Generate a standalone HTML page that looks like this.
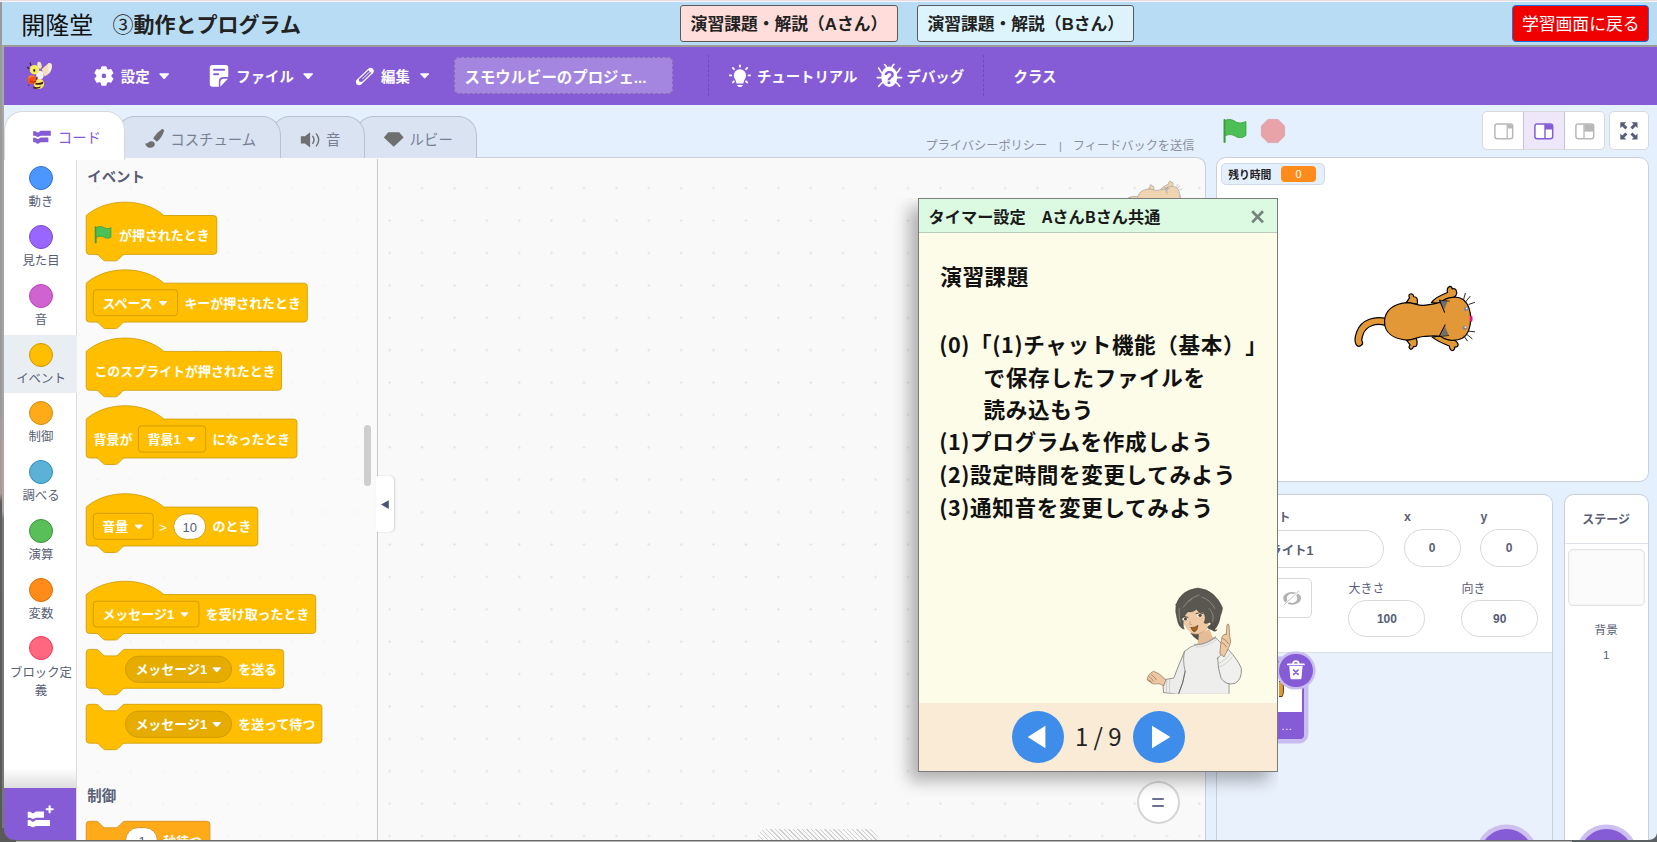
<!DOCTYPE html>
<html lang="ja"><head><meta charset="utf-8"><title>スモウルビー</title><style>
*{box-sizing:border-box;margin:0;padding:0}
html,body{width:1657px;height:842px;overflow:hidden;background:#E5F0FF}
body{position:relative;text-spacing-trim:space-all;font-family:"Liberation Sans","Noto Sans CJK JP",sans-serif;color:#575E75}
.a{position:absolute}
.t{position:absolute;white-space:nowrap}
.b{font-weight:bold}
.w{color:#fff}
svg{position:absolute;overflow:visible}
</style></head><body>
<div class="a" style="left:0.0px;top:0.0px;width:1657.0px;height:2.2px;background:linear-gradient(#E6DCE6 0,#E6DCE6 30%,#FBF3FB 45%,#FBF3FB 100%)"></div>
<div class="a" style="left:0.0px;top:2.0px;width:1657.0px;height:43.2px;background:#B9DCF5"></div>
<div class="a" style="left:0.0px;top:45.0px;width:1657.0px;height:2.0px;background:#9A9A9A"></div>
<div class="t " style="left:21.3px;top:7.9px;line-height:36.0px;font-size:24px;color:#111">開隆堂</div>
<div class="t b" style="left:112.6px;top:8.9px;line-height:31.5px;font-size:21px;color:#222"><span style="font-weight:400">③</span>動作とプログラム</div>
<div class="a" style="left:680.2px;top:5.1px;width:217.6px;height:36.5px;background:#FFDDDB;border:1px solid #5a5a5a;border-radius:3px"></div>
<div class="t b" style="left:690.6px;top:11.8px;line-height:25.2px;font-size:16.8px;color:#222">演習課題・解説（Aさん）</div>
<div class="a" style="left:917.0px;top:5.1px;width:216.7px;height:36.5px;background:#DDF4FC;border:1px solid #5a5a5a;border-radius:3px"></div>
<div class="t b" style="left:927.4px;top:11.8px;line-height:25.2px;font-size:16.8px;color:#222">演習課題・解説（Bさん）</div>
<div class="a" style="left:1512.3px;top:5.1px;width:137.2px;height:36.5px;background:#F00000;border:1px solid #1f6fd6;border-radius:4px"></div>
<div class="t w" style="left:1522.0px;top:12.2px;line-height:25.2px;font-size:16.8px;">学習画面に戻る</div>
<div class="a" style="left:4.0px;top:47.0px;width:1653.0px;height:57.6px;background:#855CD6"></div>
<svg style="left:20.00px;top:55.00px" width="40.00" height="40.00" viewBox="0 0 842 842" >
<ellipse cx="410" cy="215" rx="45" ry="75" fill="#F6E3C6" transform="rotate(-12 410 215)"/>
<path d="M455,300 L600,175 Q665,150 672,225 Q670,330 600,400 L520,455 Z" fill="#F5DDBE"/>
<path d="M590,180 Q665,150 672,225 Q670,330 610,395 Q590,300 590,180Z" fill="#F7EED8"/>
<ellipse cx="420" cy="420" rx="80" ry="90" fill="#F3F0F2"/>
<ellipse cx="400" cy="610" rx="110" ry="105" fill="#F5E868" transform="rotate(-30 400 610)"/>
<path d="M330,585 Q420,600 495,560 L480,610 Q400,640 320,620Z" fill="#4A1F1A"/>
<path d="M285,665 Q360,700 440,660 L420,695 Q350,725 280,700Z" fill="#4A1F1A"/>
<ellipse cx="305" cy="310" rx="100" ry="100" fill="#F7EE5E"/>
<ellipse cx="300" cy="325" rx="22" ry="30" fill="#3A2030"/>
<circle cx="250" cy="520" r="98" fill="#F0531C"/>
<path d="M190,470 Q230,430 290,450" stroke="#F79A5A" stroke-width="22" fill="none" stroke-linecap="round"/>
<path d="M215,550 Q260,590 330,560" stroke="#8A2410" stroke-width="16" fill="none" stroke-linecap="round"/>
<path d="M225,215 L215,165" stroke="#3A1830" stroke-width="24" stroke-linecap="round"/>
<path d="M185,285 L155,258" stroke="#3A1830" stroke-width="24" stroke-linecap="round"/>
<path d="M360,470 L350,510" stroke="#4A1F1A" stroke-width="22" stroke-linecap="round"/>
<path d="M190,630 L175,640" stroke="#4A1F1A" stroke-width="18" stroke-linecap="round"/>
</svg>
<svg style="left:0;top:0" width="200" height="110" viewBox="0 0 200 110"><g transform="translate(103.9,75.9)"><polygon points="2.51,-6.54 1.91,-9.00 -1.91,-9.00 -2.51,-6.54 -4.41,-5.44 -6.84,-6.16 -8.75,-2.84 -6.91,-1.10 -6.91,1.10 -8.75,2.84 -6.84,6.16 -4.41,5.44 -2.51,6.54 -1.91,9.00 1.91,9.00 2.51,6.54 4.41,5.44 6.84,6.16 8.75,2.84 6.91,1.10 6.91,-1.10 8.75,-2.84 6.84,-6.16 4.41,-5.44" fill="#fff" stroke="#fff" stroke-width="1.5" stroke-linejoin="round"/><circle r="2.3" fill="#855CD6"/></g></svg>
<div class="t b w" style="left:120.8px;top:66.7px;line-height:21.6px;font-size:14.4px;">設定</div>
<svg style="left:158.9px;top:73.1px" width="10.3" height="6.2" viewBox="0 0 10 6"><path d="M0.9,0.2 H9.1 Q10.2,0.4 9.5,1.3 L5.7,5.5 Q5,6.2 4.3,5.5 L0.5,1.3 Q-0.2,0.4 0.9,0.2Z" fill="#fff"/></svg>
<svg style="left:200.00px;top:58.00px" width="90.00" height="36.00" viewBox="0 0 1657 663" ><path d="M230,128 H470 Q520,128 520,178 V352 H432 Q347,352 347,437 V530 H230 Q180,530 180,480 V178 Q180,128 230,128Z" fill="#fff"/>
<path d="M374,528 V447 Q374,382 439,382 H514 Z" fill="#fff"/>
<path d="M258,215 H445" stroke="#855CD6" stroke-width="36" stroke-linecap="round"/>
<path d="M258,300 H335" stroke="#855CD6" stroke-width="36" stroke-linecap="round"/></svg>
<div class="t b w" style="left:236.3px;top:66.7px;line-height:21.6px;font-size:14.4px;">ファイル</div>
<svg style="left:303.0px;top:73.1px" width="10.3" height="6.2" viewBox="0 0 10 6"><path d="M0.9,0.2 H9.1 Q10.2,0.4 9.5,1.3 L5.7,5.5 Q5,6.2 4.3,5.5 L0.5,1.3 Q-0.2,0.4 0.9,0.2Z" fill="#fff"/></svg>
<svg style="left:345.00px;top:58.00px" width="90.00" height="36.00" viewBox="0 0 1657 663" ><path d="M262,440 L470,240" stroke="#fff" stroke-width="118" stroke-linecap="round"/>
<path d="M210,488 L226,400 L300,476 Z" fill="#fff"/>
<path d="M298,405 L462,247" stroke="#855CD6" stroke-width="72" stroke-linecap="butt"/>
<path d="M300,403 L480,230" stroke="#fff" stroke-width="17"/>
<path d="M425,205 L505,288" stroke="#fff" stroke-width="16"/>
<circle cx="291" cy="407" r="37" fill="#855CD6"/></svg>
<div class="t b w" style="left:381.0px;top:66.7px;line-height:21.6px;font-size:14.4px;">編集</div>
<svg style="left:420.0px;top:73.4px" width="9.3" height="5.6" viewBox="0 0 10 6"><path d="M0.9,0.2 H9.1 Q10.2,0.4 9.5,1.3 L5.7,5.5 Q5,6.2 4.3,5.5 L0.5,1.3 Q-0.2,0.4 0.9,0.2Z" fill="#fff"/></svg>
<div class="a" style="left:454.0px;top:57.0px;width:219.3px;height:37.0px;background:#A485E0;border:1px dashed rgba(0,0,0,.2);border-radius:5px"></div>
<div class="t b w" style="left:464.5px;top:65.7px;line-height:23.1px;font-size:15.4px;">スモウルビーのプロジェ...</div>
<div class="a" style="left:708.0px;top:55.0px;width:1.0px;height:41.0px;border-left:1px dashed #6E48BE"></div>
<div class="a" style="left:983.0px;top:55.0px;width:1.0px;height:41.0px;border-left:1px dashed #6E48BE"></div>
<svg style="left:722.00px;top:58.00px" width="90.00" height="36.00" viewBox="0 0 1657 663" ><circle cx="330" cy="320" r="112" fill="#fff"/>
<path d="M245,385 H415 L392,470 H268 Z" fill="#fff"/>
<path d="M272,495 Q330,575 388,495 Z" fill="#fff"/>
<g stroke="#fff" stroke-width="34" stroke-linecap="round">
<path d="M330,135 V160"/><path d="M200,183 L220,208"/><path d="M462,183 L442,208"/>
<path d="M145,320 H170"/><path d="M490,320 H515"/><path d="M200,450 L220,430"/><path d="M462,450 L442,430"/></g></svg>
<div class="t b w" style="left:756.9px;top:66.7px;line-height:21.6px;font-size:14.4px;">チュートリアル</div>
<svg style="left:870.00px;top:58.00px" width="90.00" height="36.00" viewBox="0 0 1657 663" ><ellipse cx="355" cy="345" rx="148" ry="188" fill="#fff"/>
<g stroke="#fff" stroke-width="30" stroke-linecap="round" fill="none">
<path d="M305,170 Q295,135 268,122"/><path d="M405,170 Q415,135 440,118"/>
<path d="M235,285 Q185,250 160,185"/><path d="M475,285 Q525,250 553,190"/>
<path d="M215,362 H135"/><path d="M495,362 H583"/>
<path d="M245,440 Q200,470 162,522"/><path d="M468,440 Q510,470 545,520"/></g>
<text x="355" y="485" font-size="330" font-weight="bold" fill="#855CD6" text-anchor="middle" font-family="Liberation Sans,sans-serif">?</text></svg>
<div class="t b w" style="left:906.5px;top:66.7px;line-height:21.6px;font-size:14.4px;">デバッグ</div>
<div class="t b w" style="left:1013.5px;top:66.7px;line-height:21.6px;font-size:14.4px;">クラス</div>
<div class="t " style="left:925.5px;top:136.6px;line-height:18.3px;font-size:12.2px;color:#8A8F9C">プライバシーポリシー</div>
<div class="t " style="left:1059.0px;top:138.1px;line-height:16.5px;font-size:11px;color:#8A8F9C">|</div>
<div class="t " style="left:1072.8px;top:136.6px;line-height:18.3px;font-size:12.2px;color:#8A8F9C">フィードバックを送信</div>
<div class="a" style="left:4.0px;top:156.6px;width:1202.0px;height:683.4px;border:1px solid #C9CFD9;border-bottom:0;border-radius:0 9.6px 0 0;background-color:#F9F9F9;background-image:radial-gradient(circle,#E2E2E2 0.85px,rgba(226,226,226,0) 1.45px);background-size:32.4px 32.4px;background-position:12.2px 14.0px;"></div>
<div class="a" style="left:77.0px;top:158.5px;width:300.5px;height:681.5px;background:rgba(249,249,249,.72);border-right:1px solid #C8C8C8"></div>
<div class="a" style="left:4.0px;top:158.5px;width:73.0px;height:681.5px;background:#fff;border-right:1px solid #DCDCDC"></div>
<div class="a" style="left:354.7px;top:115.6px;width:122.1px;height:42.4px;background:#D9E3F2;border:1px solid rgba(0,0,0,.15);border-bottom:0;border-radius:19px 19px 0 0"></div>
<div class="a" style="left:271.0px;top:115.6px;width:93.5px;height:42.4px;background:#D9E3F2;border:1px solid rgba(0,0,0,.15);border-bottom:0;border-radius:19px 19px 0 0"></div>
<div class="a" style="left:115.7px;top:115.6px;width:165.1px;height:42.4px;background:#D9E3F2;border:1px solid rgba(0,0,0,.15);border-bottom:0;border-radius:19px 19px 0 0"></div>
<div class="a" style="left:4.0px;top:111.2px;width:121.3px;height:48.8px;background:#fff;border:1px solid rgba(0,0,0,.15);border-bottom:0;border-radius:19px 19px 0 0"></div>
<svg style="left:25.00px;top:120.00px" width="90.00" height="36.00" viewBox="0 0 1657 663" ><path d="M150,205 H190 Q200,205 208,215 Q220,228 235,228 Q255,228 270,212 Q278,200 295,200 H475 V290 H290 Q278,290 268,300 Q255,312 235,312 Q215,312 203,300 Q195,290 185,290 H150 Z" fill="#855CD6"/>
<path d="M150,325 H190 Q200,325 208,335 Q220,348 235,348 Q255,348 270,332 Q278,320 295,320 H430 V410 H290 Q278,410 268,420 Q255,436 235,436 Q215,436 203,420 Q195,410 185,410 H150 Z" fill="#855CD6"/></svg>
<div class="t " style="left:57.8px;top:128.4px;line-height:21.6px;font-size:14.4px;color:#855CD6">コード</div>
<svg style="left:135.00px;top:120.00px" width="90.00" height="36.00" viewBox="0 0 1657 663" ><path d="M335,335 Q400,230 500,168 Q535,160 532,205 Q500,320 400,402 Z" fill="#6F6F6F"/>
<path d="M185,432 Q225,440 255,405 Q300,375 345,405 Q385,445 345,490 Q300,525 245,505 Q195,480 185,432Z" fill="#6F6F6F"/></svg>
<div class="t " style="left:170.3px;top:130.2px;line-height:21.6px;font-size:14.4px;color:#787F94">コスチューム</div>
<svg style="left:290.00px;top:120.00px" width="180.00" height="36.00" viewBox="0 0 1657 331" ><path d="M100,150 H138 L185,113 V252 L138,215 H100 Z" fill="#6F6F6F"/>
<path d="M210,150 Q232,182 210,215" stroke="#6F6F6F" stroke-width="13" fill="none" stroke-linecap="round"/>
<path d="M243,128 Q285,182 243,238" stroke="#6F6F6F" stroke-width="13" fill="none" stroke-linecap="round"/>
<path d="M905,113 H1005 L1046,160 L955,247 L864,160 Z" fill="#6F6F6F"/></svg>
<div class="t " style="left:326.0px;top:130.2px;line-height:21.6px;font-size:14.4px;color:#787F94">音</div>
<div class="t " style="left:409.6px;top:130.2px;line-height:21.6px;font-size:14.4px;color:#787F94">ルビー</div>
<div class="a" style="left:4.0px;top:334.9px;width:72.5px;height:58.1px;background:#E9EEF2"></div>
<div class="a" style="left:29.0px;top:166.2px;width:24.0px;height:24.0px;background:#4C97FF;border:1px solid #3373CC;border-radius:50%"></div>
<div class="t " style="left:41.0px;transform:translateX(-50%);top:193.3px;line-height:18.6px;font-size:12.4px;color:#575E75">動き</div>
<div class="a" style="left:29.0px;top:225.0px;width:24.0px;height:24.0px;background:#9966FF;border:1px solid #774DCB;border-radius:50%"></div>
<div class="t " style="left:41.0px;transform:translateX(-50%);top:252.1px;line-height:18.6px;font-size:12.4px;color:#575E75">見た目</div>
<div class="a" style="left:29.0px;top:283.8px;width:24.0px;height:24.0px;background:#CF63CF;border:1px solid #BD42BD;border-radius:50%"></div>
<div class="t " style="left:41.0px;transform:translateX(-50%);top:310.9px;line-height:18.6px;font-size:12.4px;color:#575E75">音</div>
<div class="a" style="left:29.0px;top:342.5px;width:24.0px;height:24.0px;background:#FFBF00;border:1px solid #CC9900;border-radius:50%"></div>
<div class="t " style="left:41.0px;transform:translateX(-50%);top:369.6px;line-height:18.6px;font-size:12.4px;color:#575E75">イベント</div>
<div class="a" style="left:29.0px;top:401.3px;width:24.0px;height:24.0px;background:#FFAB19;border:1px solid #CF8B17;border-radius:50%"></div>
<div class="t " style="left:41.0px;transform:translateX(-50%);top:428.4px;line-height:18.6px;font-size:12.4px;color:#575E75">制御</div>
<div class="a" style="left:29.0px;top:460.1px;width:24.0px;height:24.0px;background:#5CB1D6;border:1px solid #2E8EB8;border-radius:50%"></div>
<div class="t " style="left:41.0px;transform:translateX(-50%);top:487.2px;line-height:18.6px;font-size:12.4px;color:#575E75">調べる</div>
<div class="a" style="left:29.0px;top:518.9px;width:24.0px;height:24.0px;background:#59C059;border:1px solid #389438;border-radius:50%"></div>
<div class="t " style="left:41.0px;transform:translateX(-50%);top:546.0px;line-height:18.6px;font-size:12.4px;color:#575E75">演算</div>
<div class="a" style="left:29.0px;top:577.7px;width:24.0px;height:24.0px;background:#FF8C1A;border:1px solid #DB6E00;border-radius:50%"></div>
<div class="t " style="left:41.0px;transform:translateX(-50%);top:604.8px;line-height:18.6px;font-size:12.4px;color:#575E75">変数</div>
<div class="a" style="left:29.0px;top:636.4px;width:24.0px;height:24.0px;background:#FF6680;border:1px solid #FF3355;border-radius:50%"></div>
<div class="t " style="left:41.0px;transform:translateX(-50%);top:663.5px;line-height:18.6px;font-size:12.4px;color:#575E75">ブロック定</div>
<div class="t " style="left:41.0px;transform:translateX(-50%);top:682.3px;line-height:18.6px;font-size:12.4px;color:#575E75">義</div>
<div class="a" style="left:4.0px;top:768.0px;width:72.0px;height:19.6px;background:linear-gradient(rgba(255,255,255,0),rgba(222,222,222,1))"></div>
<div class="a" style="left:4.0px;top:787.6px;width:72.2px;height:52.4px;background:#855CD6;border-radius:0 0 0 8px"></div>
<svg style="left:14.00px;top:790.00px" width="60.00" height="48.00" viewBox="0 0 1052 842" ><g fill="#fff">
<path d="M240,380 H280 Q292,380 300,392 Q312,410 332,410 Q352,410 364,392 Q372,378 388,378 H525 V485 H388 Q374,485 364,495 Q352,508 332,508 Q312,508 300,495 Q292,485 280,485 H240Z"/>
<path d="M240,527 H280 Q292,527 300,539 Q312,557 332,557 Q352,557 364,539 Q372,525 388,525 H630 V630 H388 Q374,630 364,640 Q352,653 332,653 Q312,653 300,640 Q292,630 280,630 H240Z"/>
</g><path d="M625,285 V392 M572,338 H678" stroke="#fff" stroke-width="38" stroke-linecap="round"/></svg>
<div class="t b" style="left:87.3px;top:166.6px;line-height:21.6px;font-size:14.4px;color:#575E75">イベント</div>
<div class="t b" style="left:87.3px;top:785.6px;line-height:21.6px;font-size:14.4px;color:#575E75">制御</div>
<div class="a" style="left:77px;top:158px;width:300px;height:682px;overflow:hidden"><svg style="left:-77px;top:-158px;overflow:visible" width="380" height="880" viewBox="0 0 380 880"><path transform="translate(86.20,215.50) scale(0.810)" d="m 0,0 c 25,-22 71,-22 96,0 H 157.2 a 4,4 0 0,1 4,4 v 40 a 4,4 0 0,1 -4,4 H 48 c -2,0 -3,1 -4,2 l -4,4 c -1,1 -2,2 -4,2 h -12 c -2,0 -3,-1 -4,-2 l -4,-4 c -1,-1 -2,-2 -4,-2 H 4 a 4,4 0 0,1 -4,-4 z" fill="#FFBF00" stroke="#CC9900" stroke-width="1"/><path transform="translate(86.20,283.20) scale(0.810)" d="m 0,0 c 25,-22 71,-22 96,0 H 269.0 a 4,4 0 0,1 4,4 v 40 a 4,4 0 0,1 -4,4 H 48 c -2,0 -3,1 -4,2 l -4,4 c -1,1 -2,2 -4,2 h -12 c -2,0 -3,-1 -4,-2 l -4,-4 c -1,-1 -2,-2 -4,-2 H 4 a 4,4 0 0,1 -4,-4 z" fill="#FFBF00" stroke="#CC9900" stroke-width="1"/><rect x="93.3" y="289.8" width="84.3" height="25.8" rx="3.2" fill="#FFBF00" stroke="#CC9900" stroke-width="0.9"/><path transform="translate(158.5,300.7) scale(0.890)" d="M0.9,0.2 H9.1 Q10.2,0.4 9.5,1.3 L5.7,5.5 Q5,6.2 4.3,5.5 L0.5,1.3 Q-0.2,0.4 0.9,0.2Z" fill="#fff" stroke="rgba(0,0,0,.12)" stroke-width=".4"/><path transform="translate(86.20,351.40) scale(0.810)" d="m 0,0 c 25,-22 71,-22 96,0 H 237.1 a 4,4 0 0,1 4,4 v 40 a 4,4 0 0,1 -4,4 H 48 c -2,0 -3,1 -4,2 l -4,4 c -1,1 -2,2 -4,2 h -12 c -2,0 -3,-1 -4,-2 l -4,-4 c -1,-1 -2,-2 -4,-2 H 4 a 4,4 0 0,1 -4,-4 z" fill="#FFBF00" stroke="#CC9900" stroke-width="1"/><path transform="translate(86.20,419.10) scale(0.810)" d="m 0,0 c 25,-22 71,-22 96,0 H 256.2 a 4,4 0 0,1 4,4 v 40 a 4,4 0 0,1 -4,4 H 48 c -2,0 -3,1 -4,2 l -4,4 c -1,1 -2,2 -4,2 h -12 c -2,0 -3,-1 -4,-2 l -4,-4 c -1,-1 -2,-2 -4,-2 H 4 a 4,4 0 0,1 -4,-4 z" fill="#FFBF00" stroke="#CC9900" stroke-width="1"/><rect x="138.4" y="425.9" width="67.3" height="26.2" rx="3.2" fill="#FFBF00" stroke="#CC9900" stroke-width="0.9"/><path transform="translate(186.8,436.8) scale(0.860)" d="M0.9,0.2 H9.1 Q10.2,0.4 9.5,1.3 L5.7,5.5 Q5,6.2 4.3,5.5 L0.5,1.3 Q-0.2,0.4 0.9,0.2Z" fill="#fff" stroke="rgba(0,0,0,.12)" stroke-width=".4"/><path transform="translate(86.20,507.10) scale(0.810)" d="m 0,0 c 25,-22 71,-22 96,0 H 207.9 a 4,4 0 0,1 4,4 v 40 a 4,4 0 0,1 -4,4 H 48 c -2,0 -3,1 -4,2 l -4,4 c -1,1 -2,2 -4,2 h -12 c -2,0 -3,-1 -4,-2 l -4,-4 c -1,-1 -2,-2 -4,-2 H 4 a 4,4 0 0,1 -4,-4 z" fill="#FFBF00" stroke="#CC9900" stroke-width="1"/><rect x="93.3" y="513.3" width="59.9" height="26.0" rx="3.2" fill="#FFBF00" stroke="#CC9900" stroke-width="0.9"/><path transform="translate(134.5,524.4) scale(0.850)" d="M0.9,0.2 H9.1 Q10.2,0.4 9.5,1.3 L5.7,5.5 Q5,6.2 4.3,5.5 L0.5,1.3 Q-0.2,0.4 0.9,0.2Z" fill="#fff" stroke="rgba(0,0,0,.12)" stroke-width=".4"/><rect x="173.7" y="513.9" width="32.0" height="25.4" rx="12.7" fill="#fff" stroke="#CC9900" stroke-width="0.9"/><path transform="translate(86.20,594.60) scale(0.810)" d="m 0,0 c 25,-22 71,-22 96,0 H 279.3 a 4,4 0 0,1 4,4 v 40 a 4,4 0 0,1 -4,4 H 48 c -2,0 -3,1 -4,2 l -4,4 c -1,1 -2,2 -4,2 h -12 c -2,0 -3,-1 -4,-2 l -4,-4 c -1,-1 -2,-2 -4,-2 H 4 a 4,4 0 0,1 -4,-4 z" fill="#FFBF00" stroke="#CC9900" stroke-width="1"/><rect x="93.3" y="601.2" width="105.7" height="25.8" rx="3.2" fill="#FFBF00" stroke="#CC9900" stroke-width="0.9"/><path transform="translate(180.3,612.0) scale(0.850)" d="M0.9,0.2 H9.1 Q10.2,0.4 9.5,1.3 L5.7,5.5 Q5,6.2 4.3,5.5 L0.5,1.3 Q-0.2,0.4 0.9,0.2Z" fill="#fff" stroke="rgba(0,0,0,.12)" stroke-width=".4"/><path transform="translate(86.20,649.40) scale(0.810)" d="m 0,4 A 4,4 0 0,1 4,0 H 12 c 2,0 3,1 4,2 l 4,4 c 1,1 2,2 4,2 h 12 c 2,0 3,-1 4,-2 l 4,-4 c 1,-1 2,-2 4,-2 H 239.7 a 4,4 0 0,1 4,4 v 40 a 4,4 0 0,1 -4,4 H 48 c -2,0 -3,1 -4,2 l -4,4 c -1,1 -2,2 -4,2 h -12 c -2,0 -3,-1 -4,-2 l -4,-4 c -1,-1 -2,-2 -4,-2 H 4 a 4,4 0 0,1 -4,-4 z" fill="#FFBF00" stroke="#CC9900" stroke-width="1"/><rect x="125.4" y="656.2" width="106.2" height="26.2" rx="13.1" fill="#E6AC00" stroke="#CC9900" stroke-width="0.9"/><path transform="translate(212.3,667.0) scale(0.890)" d="M0.9,0.2 H9.1 Q10.2,0.4 9.5,1.3 L5.7,5.5 Q5,6.2 4.3,5.5 L0.5,1.3 Q-0.2,0.4 0.9,0.2Z" fill="#fff" stroke="rgba(0,0,0,.12)" stroke-width=".4"/><path transform="translate(86.20,704.30) scale(0.810)" d="m 0,4 A 4,4 0 0,1 4,0 H 12 c 2,0 3,1 4,2 l 4,4 c 1,1 2,2 4,2 h 12 c 2,0 3,-1 4,-2 l 4,-4 c 1,-1 2,-2 4,-2 H 287.0 a 4,4 0 0,1 4,4 v 40 a 4,4 0 0,1 -4,4 H 48 c -2,0 -3,1 -4,2 l -4,4 c -1,1 -2,2 -4,2 h -12 c -2,0 -3,-1 -4,-2 l -4,-4 c -1,-1 -2,-2 -4,-2 H 4 a 4,4 0 0,1 -4,-4 z" fill="#FFBF00" stroke="#CC9900" stroke-width="1"/><rect x="125.4" y="711.1" width="106.2" height="26.2" rx="13.1" fill="#E6AC00" stroke="#CC9900" stroke-width="0.9"/><path transform="translate(212.3,721.9) scale(0.890)" d="M0.9,0.2 H9.1 Q10.2,0.4 9.5,1.3 L5.7,5.5 Q5,6.2 4.3,5.5 L0.5,1.3 Q-0.2,0.4 0.9,0.2Z" fill="#fff" stroke="rgba(0,0,0,.12)" stroke-width=".4"/><path transform="translate(86.20,821.30) scale(0.810)" d="m 0,4 A 4,4 0 0,1 4,0 H 12 c 2,0 3,1 4,2 l 4,4 c 1,1 2,2 4,2 h 12 c 2,0 3,-1 4,-2 l 4,-4 c 1,-1 2,-2 4,-2 H 148.7 a 4,4 0 0,1 4,4 v 40 a 4,4 0 0,1 -4,4 H 48 c -2,0 -3,1 -4,2 l -4,4 c -1,1 -2,2 -4,2 h -12 c -2,0 -3,-1 -4,-2 l -4,-4 c -1,-1 -2,-2 -4,-2 H 4 a 4,4 0 0,1 -4,-4 z" fill="#FFAB19" stroke="#CF8B17" stroke-width="1"/><rect x="125.6" y="827.6" width="31.8" height="25.4" rx="12.7" fill="#fff" stroke="#CF8B17" stroke-width="0.9"/><g transform="translate(94.7,226.3) scale(0.81)"><path d="M1.2,1 V20" stroke="#45993D" stroke-width="2.4" stroke-linecap="round"/><path d="M1.5,2.2 C5,-0.5 9,0 12,1.8 C15,3.5 17.5,3 20,1.6 V13.5 C17.5,15 15,15.3 12,13.6 C9,12 5,11.6 1.5,14 Z" fill="#4CBF56" stroke="#45993D" stroke-width="1"/></g></svg></div>
<div class="t " style="left:119.0px;top:225.9px;line-height:19.4px;font-size:12.96px;font-weight:bold;color:#fff;">が押されたとき</div>
<div class="t " style="left:102.4px;top:293.8px;line-height:19.4px;font-size:12.96px;font-weight:bold;color:#fff;">スペース</div>
<div class="t " style="left:184.4px;top:293.8px;line-height:19.4px;font-size:12.96px;font-weight:bold;color:#fff;">キーが押されたとき</div>
<div class="t " style="left:94.4px;top:361.8px;line-height:19.4px;font-size:12.96px;font-weight:bold;color:#fff;">このスプライトが押されたとき</div>
<div class="t " style="left:93.5px;top:429.6px;line-height:19.4px;font-size:12.96px;font-weight:bold;color:#fff;">背景が</div>
<div class="t " style="left:147.5px;top:429.6px;line-height:19.4px;font-size:12.96px;font-weight:bold;color:#fff;">背景1</div>
<div class="t " style="left:212.6px;top:429.6px;line-height:19.4px;font-size:12.96px;font-weight:bold;color:#fff;">になったとき</div>
<div class="t " style="left:102.2px;top:517.4px;line-height:19.4px;font-size:12.96px;font-weight:bold;color:#fff;">音量</div>
<div class="t " style="left:159.0px;top:518.1px;line-height:19.4px;font-size:12.96px;color:#fff">&gt;</div>
<div class="t " style="left:189.7px;transform:translateX(-50%);top:518.1px;line-height:19.4px;font-size:12.96px;color:#575E75">10</div>
<div class="t " style="left:212.6px;top:517.4px;line-height:19.4px;font-size:12.96px;font-weight:bold;color:#fff;">のとき</div>
<div class="t " style="left:102.4px;top:605.1px;line-height:19.4px;font-size:12.96px;font-weight:bold;color:#fff;">メッセージ1</div>
<div class="t " style="left:205.8px;top:605.1px;line-height:19.4px;font-size:12.96px;font-weight:bold;color:#fff;">を受け取ったとき</div>
<div class="t " style="left:135.4px;top:660.0px;line-height:19.4px;font-size:12.96px;font-weight:bold;color:#fff;">メッセージ1</div>
<div class="t " style="left:238.2px;top:660.0px;line-height:19.4px;font-size:12.96px;font-weight:bold;color:#fff;">を送る</div>
<div class="t " style="left:135.4px;top:714.8px;line-height:19.4px;font-size:12.96px;font-weight:bold;color:#fff;">メッセージ1</div>
<div class="t " style="left:238.2px;top:714.8px;line-height:19.4px;font-size:12.96px;font-weight:bold;color:#fff;">を送って待つ</div>
<div class="a" style="left:77px;top:820px;width:300px;height:20px;overflow:hidden"><div class="t" style="left:61.5px;top:12.3px;font-size:12.96px;line-height:20px;color:#575E75">1</div><div class="t" style="left:86.3px;top:12.3px;font-size:12.96px;line-height:20px;font-weight:bold;color:#fff">秒待つ</div></div>
<div class="a" style="left:364.1px;top:424.7px;width:6.7px;height:61.4px;background:#CECECE;border-radius:4px"></div>
<div class="a" style="left:376.4px;top:475.7px;width:17.8px;height:56.4px;background:#fff;border-radius:0 5px 5px 0;box-shadow:1px 0 2px rgba(0,0,0,.15)"></div>
<svg style="left:381.3px;top:499.8px" width="7.8" height="9.2" viewBox="0 0 8 9"><path d="M8,0 V9 L0,4.5Z" fill="#4C5674"/></svg>
<div class="a" style="left:758.0px;top:828.6px;width:119.6px;height:11.4px;border-radius:8px 8px 0 0;background-color:#F9F9F9;background-image:repeating-linear-gradient(45deg,#D0D0D0 0,#D0D0D0 1px,rgba(0,0,0,0) 1px,rgba(0,0,0,0) 3.2px)"></div>
<div class="a" style="left:1137.0px;top:780.9px;width:42.8px;height:42.9px;background:#fff;border:2px solid #D5D5D5;border-radius:50%"></div>
<div class="a" style="left:1152.1px;top:797.7px;width:12.3px;height:2.3px;background:#6B7190;border-radius:1.2px"></div>
<div class="a" style="left:1152.1px;top:804.7px;width:12.3px;height:2.3px;background:#6B7190;border-radius:1.2px"></div>
<svg style="left:1115.8px;top:173.0px;opacity:0.38" width="78.4" height="49.0" viewBox="0 0 1347 842"><g stroke-linejoin="round" stroke-linecap="round">
<path d="M388,438 C300,415 200,440 168,530 C152,575 152,600 160,612" stroke="#000" stroke-width="68" fill="none"/>
<path d="M388,438 C300,415 200,440 168,530 C152,575 152,600 160,612" stroke="#E39838" stroke-width="48" fill="none"/>
<g fill="#E39838" stroke="#000" stroke-width="10">
<path d="M560,270 L585,235 Q570,205 600,200 Q620,205 620,225 Q650,225 650,250 Q655,270 650,290 Z"/>
<path d="M560,590 L590,630 Q570,655 595,668 Q615,665 618,645 Q645,648 648,625 Q655,600 640,575 Z"/>
<path d="M770,275 Q800,230 905,190 Q895,150 925,138 Q945,140 945,160 Q975,150 980,178 Q990,195 975,215 L900,290 Z"/>
<path d="M775,565 Q820,600 920,640 Q925,680 950,678 Q968,672 965,650 Q995,650 995,625 Q985,600 960,590 L900,545 Z"/>
<path d="M375,435 C375,340 450,285 560,275 C620,275 650,300 700,298 C760,290 800,285 850,270 C900,225 990,215 1040,250 C1085,290 1100,350 1100,410 C1100,470 1085,540 1030,575 C980,600 900,600 850,560 C800,550 760,555 700,560 C650,565 620,590 560,590 C450,580 375,530 375,435 Z"/>
</g>
<path d="M838,255 L905,262 L880,330 Z" fill="#6E6E6E" stroke="none"/>
<path d="M838,255 L880,355" stroke="#000" stroke-width="9" fill="none"/>
<path d="M838,255 L920,262" stroke="#000" stroke-width="6" fill="none"/>
<path d="M845,555 L915,548 L885,478 Z" fill="#6E6E6E" stroke="none"/>
<path d="M835,560 L885,462" stroke="#000" stroke-width="9" fill="none"/>
<path d="M835,560 L915,552" stroke="#000" stroke-width="6" fill="none"/>
<circle cx="1060" cy="328" r="19" fill="#8A8A8A"/><circle cx="1066" cy="322" r="7" fill="#fff"/>
<circle cx="1050" cy="487" r="19" fill="#8A8A8A"/><circle cx="1056" cy="481" r="7" fill="#fff"/>
<ellipse cx="1104" cy="410" rx="12" ry="27" fill="#E0109A"/>
<g stroke="#222" stroke-width="8" fill="none">
<path d="M1040,250 L1055,197"/><path d="M1058,268 L1095,222"/><path d="M1085,290 L1133,273"/>
<path d="M1080,515 L1133,520"/><path d="M1065,540 L1112,578"/><path d="M1045,557 L1072,597"/>
</g></g></svg>
<svg style="left:1215.00px;top:108.00px" width="80.00" height="44.00" viewBox="0 0 1531 842" ><path d="M183,232 V650" stroke="#3F9A3A" stroke-width="40" stroke-linecap="round"/>
<path d="M190,245 C240,205 330,215 390,260 C450,300 530,290 592,258 V525 C530,575 450,580 390,540 C330,500 250,500 190,535 Z" fill="#4CBF56" stroke="#3F9A3A" stroke-width="16" stroke-linejoin="round"/>
<path d="M1015,218 H1205 L1332,345 V535 L1205,662 H1015 L888,535 V345Z" fill="#E8A3A9" stroke="#DA9CA4" stroke-width="14" stroke-linejoin="round"/></svg>
<div class="a" style="left:1482.3px;top:111.2px;width:122.7px;height:39.3px;background:#fff;border:1px solid #D9D9D9;border-radius:5px"></div>
<div class="a" style="left:1523.2px;top:111.2px;width:41.4px;height:39.3px;background:#EDE7F9;border-left:1px solid #C9BEE6;border-right:1px solid #C9BEE6;border-top:1px solid #D9D9D9;border-bottom:1px solid #D9D9D9"></div>
<div class="a" style="left:1609.3px;top:111.2px;width:39.4px;height:39.3px;background:#fff;border:1px solid #D9D9D9;border-radius:5px"></div>
<svg style="left:1493.8px;top:122.6px" width="19.6" height="16.6" viewBox="0 0 19.6 16.6"><rect x="0.9" y="0.9" width="17.8" height="14.8" rx="2.2" fill="#fff" stroke="#B8B8B8" stroke-width="1.5"/><path d="M13.2,1 V15.6" stroke="#B8B8B8" stroke-width="1.3"/><path d="M13.8,1.6 H16.6 Q18,1.6 18,3 V5.6 H13.8Z" fill="#B8B8B8"/></svg>
<svg style="left:1534.0px;top:122.6px" width="19.6" height="16.6" viewBox="0 0 19.6 16.6"><rect x="0.9" y="0.9" width="17.8" height="14.8" rx="2.2" fill="#fff" stroke="#855CD6" stroke-width="1.5"/><path d="M11,1 V15.6" stroke="#855CD6" stroke-width="1.4"/><path d="M11,1.2 H16.6 Q18.4,1.2 18.4,3 V6.4 H11Z" fill="#855CD6"/></svg>
<svg style="left:1574.6px;top:122.6px" width="19.6" height="16.6" viewBox="0 0 19.6 16.6"><rect x="0.9" y="0.9" width="17.8" height="14.8" rx="2.2" fill="#fff" stroke="#B8B8B8" stroke-width="1.5"/><path d="M9,1 V15.6" stroke="#B8B8B8" stroke-width="1.3"/><path d="M9.4,1.4 H16.6 Q18.2,1.4 18.2,3 V8 H9.4Z" fill="#B8B8B8"/><path d="M9,8 H18.6" stroke="#B8B8B8" stroke-width="1.2"/></svg>
<svg style="left:1620px;top:122px" width="17.8" height="17.8" viewBox="0 0 17.8 17.8"><g fill="#575E75"><path d="M0.3,0.3 H6.2 L4.3,2.2 L7.4,5.3 L5.3,7.4 L2.2,4.3 L0.3,6.2Z"/><path d="M17.5,0.3 V6.2 L15.6,4.3 L12.5,7.4 L10.4,5.3 L13.5,2.2 L11.6,0.3Z"/><path d="M0.3,17.5 V11.6 L2.2,13.5 L5.3,10.4 L7.4,12.5 L4.3,15.6 L6.2,17.5Z"/><path d="M17.5,17.5 H11.6 L13.5,15.6 L10.4,12.5 L12.5,10.4 L15.6,13.5 L17.5,11.6Z"/></g></svg>
<div class="a" style="left:1215.6px;top:156.6px;width:433.2px;height:325.4px;background:#fff;border:1px solid #C9CFD9;border-radius:9.6px"></div>
<div class="a" style="left:1221.0px;top:163.0px;width:103.5px;height:21.8px;background:#E5F0FF;border:1px solid #D0D9E8;border-radius:4.8px"></div>
<div class="t b" style="left:1228.2px;top:167.1px;line-height:16.2px;font-size:10.8px;color:#222">残り時間</div>
<div class="a" style="left:1280.8px;top:166.3px;width:35.2px;height:15.4px;background:#FF8C1A;border-radius:4px"></div>
<div class="t w" style="left:1298.6px;transform:translateX(-50%);top:166.1px;line-height:16.5px;font-size:11px;">0</div>
<svg style="left:1340.0px;top:270.0px;opacity:1" width="160.0" height="100.0" viewBox="0 0 1347 842"><g stroke-linejoin="round" stroke-linecap="round">
<path d="M388,438 C300,415 200,440 168,530 C152,575 152,600 160,612" stroke="#000" stroke-width="68" fill="none"/>
<path d="M388,438 C300,415 200,440 168,530 C152,575 152,600 160,612" stroke="#E39838" stroke-width="48" fill="none"/>
<g fill="#E39838" stroke="#000" stroke-width="10">
<path d="M560,270 L585,235 Q570,205 600,200 Q620,205 620,225 Q650,225 650,250 Q655,270 650,290 Z"/>
<path d="M560,590 L590,630 Q570,655 595,668 Q615,665 618,645 Q645,648 648,625 Q655,600 640,575 Z"/>
<path d="M770,275 Q800,230 905,190 Q895,150 925,138 Q945,140 945,160 Q975,150 980,178 Q990,195 975,215 L900,290 Z"/>
<path d="M775,565 Q820,600 920,640 Q925,680 950,678 Q968,672 965,650 Q995,650 995,625 Q985,600 960,590 L900,545 Z"/>
<path d="M375,435 C375,340 450,285 560,275 C620,275 650,300 700,298 C760,290 800,285 850,270 C900,225 990,215 1040,250 C1085,290 1100,350 1100,410 C1100,470 1085,540 1030,575 C980,600 900,600 850,560 C800,550 760,555 700,560 C650,565 620,590 560,590 C450,580 375,530 375,435 Z"/>
</g>
<path d="M838,255 L905,262 L880,330 Z" fill="#6E6E6E" stroke="none"/>
<path d="M838,255 L880,355" stroke="#000" stroke-width="9" fill="none"/>
<path d="M838,255 L920,262" stroke="#000" stroke-width="6" fill="none"/>
<path d="M845,555 L915,548 L885,478 Z" fill="#6E6E6E" stroke="none"/>
<path d="M835,560 L885,462" stroke="#000" stroke-width="9" fill="none"/>
<path d="M835,560 L915,552" stroke="#000" stroke-width="6" fill="none"/>
<circle cx="1060" cy="328" r="19" fill="#8A8A8A"/><circle cx="1066" cy="322" r="7" fill="#fff"/>
<circle cx="1050" cy="487" r="19" fill="#8A8A8A"/><circle cx="1056" cy="481" r="7" fill="#fff"/>
<ellipse cx="1104" cy="410" rx="12" ry="27" fill="#E0109A"/>
<g stroke="#222" stroke-width="8" fill="none">
<path d="M1040,250 L1055,197"/><path d="M1058,268 L1095,222"/><path d="M1085,290 L1133,273"/>
<path d="M1080,515 L1133,520"/><path d="M1065,540 L1112,578"/><path d="M1045,557 L1072,597"/>
</g></g></svg>
<div class="a" style="left:1215.6px;top:493.5px;width:337.2px;height:356.5px;background:#E9F1FC;border:1px solid #C9CFD9;border-radius:9.6px 9.6px 0 0"></div>
<div class="a" style="left:1216.6px;top:494.5px;width:335.2px;height:158.9px;background:#fff;border-bottom:1px solid #D9DEE8;border-radius:8.6px 8.6px 0 0"></div>
<div class="t b" style="left:1230.5px;top:509.1px;line-height:18.0px;font-size:12px;color:#575E75">スプライト</div>
<div class="a" style="left:1240.0px;top:530.4px;width:143.6px;height:38.0px;background:#fff;border:1px solid #D9D9D9;border-radius:20px"></div>
<div class="t b" style="left:1244.5px;top:541.9px;line-height:18.6px;font-size:12.4px;color:#575E75">スプライト1</div>
<div class="t b" style="left:1404.0px;top:507.5px;line-height:18.6px;font-size:12.4px;color:#575E75">x</div>
<div class="a" style="left:1404.2px;top:529.2px;width:56.6px;height:37.5px;background:#fff;border:1px solid #D9D9D9;border-radius:20px"></div>
<div class="t b" style="left:1432.2px;transform:translateX(-50%);top:539.1px;line-height:18.0px;font-size:12px;color:#575E75">0</div>
<div class="t b" style="left:1480.6px;top:507.5px;line-height:18.6px;font-size:12.4px;color:#575E75">y</div>
<div class="a" style="left:1480.0px;top:529.2px;width:58.0px;height:37.5px;background:#fff;border:1px solid #D9D9D9;border-radius:20px"></div>
<div class="t b" style="left:1509.0px;transform:translateX(-50%);top:539.1px;line-height:18.0px;font-size:12px;color:#575E75">0</div>
<div class="a" style="left:1232.0px;top:578.1px;width:79.8px;height:40.4px;background:#fff;border:1px solid #D9D9D9;border-radius:5px"></div>
<svg style="left:1272.00px;top:580.00px" width="44.00" height="40.00" viewBox="0 0 926 842" ><path fill-rule="evenodd" fill="#B2B2B2" d="M235,385 A188,135 0 1 0 611,385 A188,135 0 1 0 235,385 Z M312,385 A111,97 0 1 0 534,385 A111,97 0 1 0 312,385 Z"/><path d="M262,528 L572,228" stroke="#fff" stroke-width="52"/><path d="M255,520 L565,236" stroke="#B4B4B4" stroke-width="17" stroke-linecap="round"/></svg>
<div class="t " style="left:1348.6px;top:580.2px;line-height:18.0px;font-size:12px;color:#575E75">大きさ</div>
<div class="a" style="left:1348.4px;top:600.4px;width:76.5px;height:37.1px;background:#fff;border:1px solid #D9D9D9;border-radius:20px"></div>
<div class="t b" style="left:1386.9px;transform:translateX(-50%);top:609.9px;line-height:18.0px;font-size:12px;color:#575E75">100</div>
<div class="t " style="left:1461.6px;top:580.2px;line-height:18.0px;font-size:12px;color:#575E75">向き</div>
<div class="a" style="left:1461.2px;top:600.4px;width:76.8px;height:37.1px;background:#fff;border:1px solid #D9D9D9;border-radius:20px"></div>
<div class="t b" style="left:1499.7px;transform:translateX(-50%);top:609.9px;line-height:18.0px;font-size:12px;color:#575E75">90</div>
<div class="a" style="left:1227.0px;top:661.0px;width:76.6px;height:78.4px;background:#fff;border:2.4px solid #855CD6;border-radius:5px;box-shadow:0 0 0 4.4px #C8BCF0"></div>
<div class="a" style="left:1227.0px;top:711.5px;width:76.6px;height:27.9px;background:#855CD6;border-radius:0 0 4px 4px"></div>
<div class="t w" style="left:1281.5px;top:717.6px;line-height:16.5px;font-size:11px;letter-spacing:.6px">...</div>
<div class="a" style="left:1279.0px;top:681.0px;width:4.5px;height:16.0px;background:#E39838;border-radius:0 60% 60% 0;border:1px solid #5b3a10;border-left:0"></div>
<div class="a" style="left:1279.4px;top:653.6px;width:33.4px;height:33.4px;background:#855CD6;border-radius:50%;box-shadow:0 0 0 2.6px #C8BCF0"></div>
<svg style="left:1287.1px;top:660.2px" width="17.8" height="20" viewBox="0 0 16 18"><g fill="none" stroke="#fff" stroke-width="1.6" stroke-linecap="round" stroke-linejoin="round"><path d="M0.8,4 H15.2"/><path d="M5.4,3.6 Q5.4,1 8,1 Q10.6,1 10.6,3.6"/></g>
<path d="M2,5.4 H14 L13,16.4 Q12.9,17.4 11.8,17.4 H4.2 Q3.1,17.4 3,16.4Z" fill="#fff"/>
<path d="M6,9 L10,13 M10,9 L6,13" stroke="#855CD6" stroke-width="1.5" stroke-linecap="round"/></svg>
<div class="a" style="left:1563.6px;top:493.5px;width:85.2px;height:356.5px;background:#fff;border:1px solid #C9CFD9;border-radius:9.6px 9.6px 0 0"></div>
<div class="t b" style="left:1606.2px;transform:translateX(-50%);top:511.4px;line-height:18.0px;font-size:12px;color:#575E75">ステージ</div>
<div class="a" style="left:1564.6px;top:543.0px;width:83.2px;height:1.0px;background:#DCE1EA"></div>
<div class="a" style="left:1568.4px;top:549.4px;width:76.5px;height:57.0px;background:#FBFBFB;border:1px solid #E3E3E3;border-radius:5px;box-shadow:inset 0 0 2px rgba(0,0,0,.08)"></div>
<div class="t " style="left:1606.2px;transform:translateX(-50%);top:621.0px;line-height:17.4px;font-size:11.6px;color:#575E75">背景</div>
<div class="t " style="left:1606.2px;transform:translateX(-50%);top:645.5px;line-height:17.4px;font-size:11.6px;color:#575E75">1</div>
<div class="a" style="left:1479.8px;top:829.0px;width:52.8px;height:52.8px;background:#855CD6;border-radius:50%;box-shadow:0 0 0 4.6px #CDBFEF"></div>
<div class="a" style="left:1579.9px;top:829.0px;width:52.8px;height:52.8px;background:#855CD6;border-radius:50%;box-shadow:0 0 0 4.6px #CDBFEF"></div>
<div class="a" style="left:918.0px;top:198.0px;width:360.0px;height:573.6px;background:#FDFCE8;border:1px solid #7C7C7C;box-shadow:-9px 9px 15px rgba(0,0,0,.29);clip-path:inset(0 0 -40px -40px)"></div>
<div class="a" style="left:919.0px;top:199.0px;width:358.0px;height:33.9px;background:#DCFAE2;border-bottom:1px solid #B9C9BC"></div>
<div class="a" style="left:919.0px;top:703.0px;width:358.0px;height:67.6px;background:#FAEBD7"></div>
<div class="t b" style="left:928.6px;top:203.8px;line-height:24.3px;font-size:16.2px;color:#1a1a1a;font-family:'Noto Sans CJK JP',sans-serif">タイマー設定　AさんBさん共通</div>
<svg style="left:1250.9px;top:210px" width="13.2" height="13.6" viewBox="0 0 13.2 13.6"><path d="M1.2,1.2 L12,12.4 M12,1.2 L1.2,12.4" stroke="#75847A" stroke-width="2.7"/></svg>
<div class="t b" style="left:940.2px;top:260.0px;line-height:32.0px;font-size:21.6px;font-family:'Noto Sans CJK JP',sans-serif;color:#111;letter-spacing:.62px">演習課題</div>
<div class="t b" style="left:939.2px;top:328.2px;line-height:32.0px;font-size:21.6px;font-family:'Noto Sans CJK JP',sans-serif;color:#111;letter-spacing:.62px">(0)「(1)チャット機能（基本）」</div>
<div class="t b" style="left:939.2px;top:360.6px;line-height:32.0px;font-size:21.6px;font-family:'Noto Sans CJK JP',sans-serif;color:#111;letter-spacing:.62px">　　で保存したファイルを</div>
<div class="t b" style="left:939.2px;top:392.6px;line-height:32.0px;font-size:21.6px;font-family:'Noto Sans CJK JP',sans-serif;color:#111;letter-spacing:.62px">　　読み込もう</div>
<div class="t b" style="left:939.2px;top:425.4px;line-height:32.0px;font-size:21.6px;font-family:'Noto Sans CJK JP',sans-serif;color:#111;letter-spacing:.62px">(1)プログラムを作成しよう</div>
<div class="t b" style="left:939.2px;top:458.4px;line-height:32.0px;font-size:21.6px;font-family:'Noto Sans CJK JP',sans-serif;color:#111;letter-spacing:.62px">(2)設定時間を変更してみよう</div>
<div class="t b" style="left:939.2px;top:491.0px;line-height:32.0px;font-size:21.6px;font-family:'Noto Sans CJK JP',sans-serif;color:#111;letter-spacing:.62px">(3)通知音を変更してみよう</div>
<svg style="left:1135.00px;top:580.00px" width="120.00" height="120.00" viewBox="0 0 842 842" ><g stroke-linejoin="round" stroke-linecap="round">
<!-- left arm sleeve -->
<path d="M348,500 Q305,600 272,688 L212,698 Q188,740 200,790 L305,802 Q350,700 366,600 Z" fill="#ECECEA" stroke="#6A6A6A" stroke-width="5"/>
<path d="M225,700 Q215,745 222,792 M245,698 Q236,745 245,796" stroke="#B9B9B5" stroke-width="4" fill="none"/>
<!-- torso -->
<path d="M440,450 Q380,468 348,500 Q332,560 352,640 Q342,720 305,802 H660 V560 Q640,470 570,408 Z" fill="#EEEEEC" stroke="#7A7A7A" stroke-width="5"/>
<path d="M352,640 Q340,720 305,802" stroke="#5A5A5A" stroke-width="5" fill="none"/>
<!-- right sleeve -->
<path d="M580,548 Q600,520 655,488 Q722,560 746,620 Q752,700 700,726 Q640,742 604,690 Q580,620 580,548Z" fill="#F0F0EE" stroke="#6A6A6A" stroke-width="5"/>
<path d="M588,585 Q620,575 668,520 M592,610 Q630,600 680,545" stroke="#B9B9B5" stroke-width="4" fill="none"/>
<!-- neck -->
<path d="M447,375 L438,456 Q490,452 548,408 L522,345 Z" fill="#E6BC96"/>
<path d="M420,452 Q490,460 565,400" stroke="#9A9A98" stroke-width="9" fill="none"/>
<path d="M428,470 Q495,476 578,415" stroke="#C9C9C5" stroke-width="5" fill="none"/>
<!-- back hair -->
<path d="M388,372 Q410,405 445,425 L448,380Z" fill="#55524C"/>
<path d="M500,330 Q560,300 575,230 L600,260 Q590,320 560,348 Q575,350 580,340 Q570,375 540,352 Q520,350 500,330Z" fill="#55524C"/>
<!-- face -->
<path d="M333,215 Q322,320 395,372 Q450,398 505,340 Q540,280 522,195 Q430,150 333,215Z" fill="#EEC9A4"/>
<path d="M395,372 Q450,398 505,340" stroke="#B98F6E" stroke-width="4" fill="none"/>
<!-- hair -->
<path d="M288,172 Q325,70 440,57 Q560,68 614,196 Q606,262 566,300 Q560,330 545,345 Q548,305 520,296 Q500,312 484,300 Q505,262 478,225 Q455,238 430,205 Q405,232 372,222 Q340,245 338,300 Q336,330 345,345 Q305,335 296,272 Q280,222 288,172Z" fill="#5A5750" stroke="#45433E" stroke-width="4"/>
<g stroke="#8A877E" stroke-width="7" fill="none"><path d="M372,150 Q400,120 450,105"/><path d="M340,190 Q360,150 400,135"/><path d="M470,120 Q530,140 560,200"/><path d="M520,200 Q560,240 545,290"/><path d="M310,200 Q305,250 318,295"/></g>
<!-- eyes, mouth -->
<ellipse cx="350" cy="273" rx="19" ry="13" fill="#F3EEE8"/><ellipse cx="354" cy="273" rx="11" ry="11" fill="#5A4A46"/>
<ellipse cx="453" cy="248" rx="22" ry="14" fill="#F3EEE8"/><ellipse cx="457" cy="248" rx="12" ry="12" fill="#5A4A46"/>
<path d="M330,262 Q350,250 372,262" stroke="#3B3935" stroke-width="6" fill="none"/>
<path d="M428,236 Q452,222 478,236" stroke="#3B3935" stroke-width="6" fill="none"/>
<path d="M388,292 L384,312 L398,314" stroke="#B98F6E" stroke-width="4" fill="none"/>
<path d="M393,334 Q420,336 442,318 Q438,360 414,364 Q398,356 393,334Z" fill="#A8621E" stroke="#5A3A1A" stroke-width="4"/>
<rect x="180" y="798" width="500" height="16" fill="#FDFCE8" stroke="none"/>
<!-- raised hand -->
<path d="M640,380 L645,315 Q655,300 660,318 L665,400 Q680,430 660,470 L625,540 L595,515 Q600,450 610,400 Q620,375 640,380Z" fill="#EDC8A2" stroke="#7A5A48" stroke-width="4"/>
<path d="M615,410 Q640,420 655,445 M612,440 Q630,448 640,468" stroke="#7A5A48" stroke-width="4" fill="none"/>
<!-- left hand -->
<path d="M215,700 Q170,650 130,640 Q90,660 85,700 Q110,720 130,730 Q170,720 200,740Z" fill="#EDC8A2" stroke="#7A5A48" stroke-width="4"/>
<path d="M100,680 Q120,690 130,710 M115,665 Q135,675 150,700 M92,700 Q110,705 118,722" stroke="#7A5A48" stroke-width="4" fill="none"/>
</g></svg>
<svg style="left:1011.9px;top:710.7px" width="52" height="52" viewBox="0 0 52 52"><circle cx="26" cy="26" r="26" fill="#3E8DEB"/><path d="M33.4,14.8 V37.2 L15.7,26Z" fill="#fff"/></svg>
<svg style="left:1132.5px;top:710.7px" width="52" height="52" viewBox="0 0 52 52"><circle cx="26" cy="26" r="26" fill="#3E8DEB"/><path d="M19,14.8 V37.2 L37.3,26Z" fill="#fff"/></svg>
<div class="t " style="left:1098.3px;transform:translateX(-50%);top:718.4px;line-height:36.0px;font-size:24px;color:#222;font-family:'Noto Sans CJK JP',sans-serif">1 / 9</div>
<div class="a" style="left:2.0px;top:45.0px;width:2.0px;height:797.0px;background:linear-gradient(#A6A6A6 0,#A6A6A6 49%,#B0A6A4 50%,#B0A6A4 58.5%,#7A7A7A 59.5%,#777 100%)"></div>
<div class="a" style="left:0.0px;top:2.0px;width:2.0px;height:840.0px;background:linear-gradient(#9A9A9A 0,#9A9A9A 49%,#A89A98 50%,#A89A98 58.5%,#5E5E5E 59.5%,#585858 100%)"></div>
<div class="a" style="left:0.0px;top:840.0px;width:1572.0px;height:2.0px;background:linear-gradient(#6A6A6A 0,#6A6A6A 45%,#B0B0B0 55%,#B0B0B0 100%)"></div>
<div class="a" style="left:1572.0px;top:840.0px;width:85.0px;height:2.0px;background:#5B6163"></div>
<svg style="left:0;top:828px" width="16" height="14" viewBox="0 0 16 14"><path d="M0,0 H4 Q4,12 16,12 V14 H0Z" fill="#5a5a5a"/></svg>
<svg style="left:1645px;top:830px" width="12" height="12" viewBox="0 0 12 12"><path d="M12,3 Q11,10 3,10 V12 H12Z" fill="#5B6163"/></svg>
</body></html>
